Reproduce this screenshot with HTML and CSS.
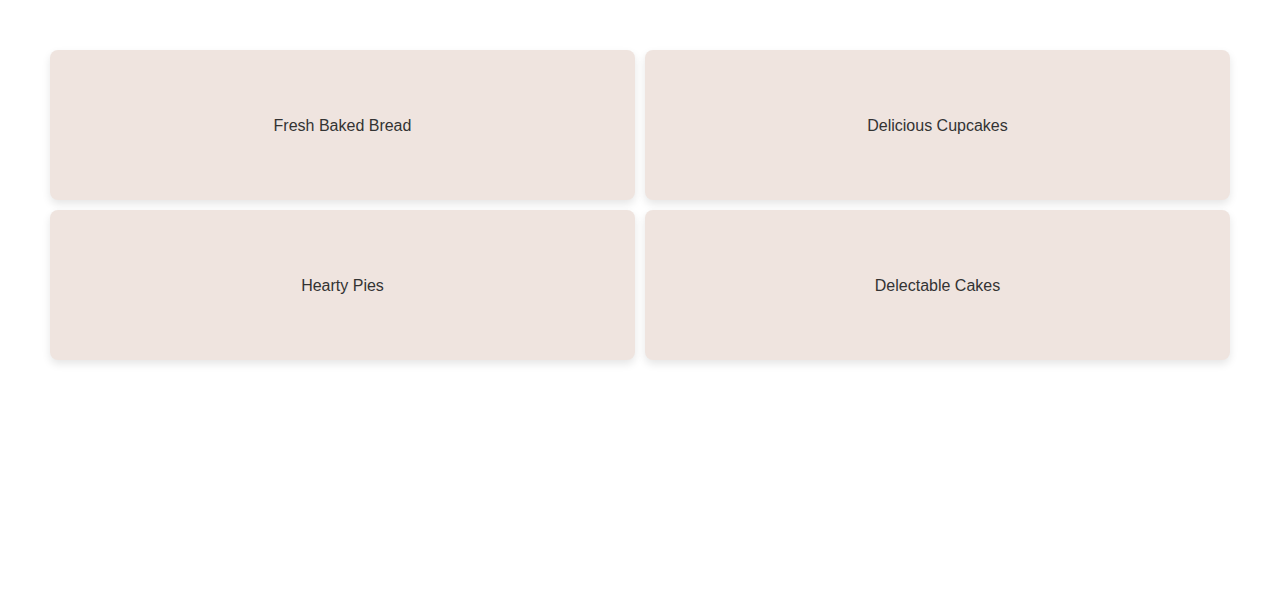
FILE: index.html
```
<!DOCTYPE html>
<html>
<head>
<meta charset="utf-8">
<link rel="stylesheet" href="styles.css">
</head>
<body>
<div class="grid">
  <div class="card">Fresh Baked Bread</div>
  <div class="card">Delicious Cupcakes</div>
  <div class="card">Hearty Pies</div>
  <div class="card">Delectable Cakes</div>
</div>
</body>
</html>
```
FILE: styles.css
```
html, body {
  margin: 0;
  padding: 0;
  background: #ffffff;
}
body {
  font-family: "Liberation Sans", Arial, sans-serif;
}
.grid {
  display: grid;
  grid-template-columns: 1fr 1fr;
  gap: 10px;
  padding: 50px;
}
.card {
  box-sizing: border-box;
  height: 150px;
  padding-top: 2px;
  background: #efe4df;
  border-radius: 8px;
  box-shadow: 0 4px 8px rgba(0, 0, 0, 0.1);
  display: flex;
  align-items: center;
  justify-content: center;
  font-size: 16px;
  color: #333333;
}
```
